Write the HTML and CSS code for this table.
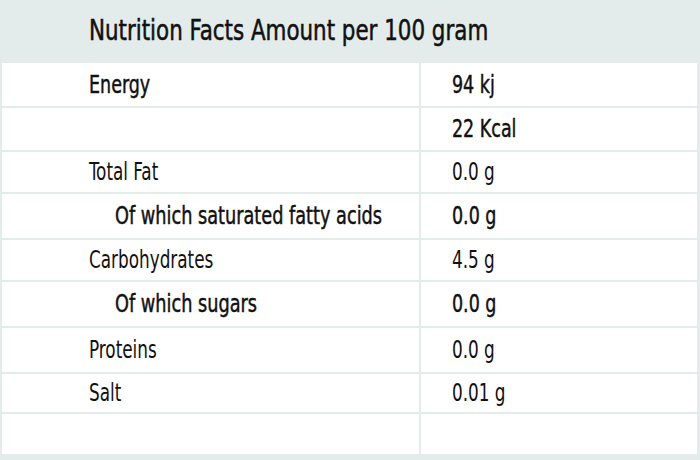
FILE: index.html
```html
<!DOCTYPE html>
<html>
<head>
<meta charset="utf-8">
<link rel="stylesheet" href="styles.css">
</head>
<body>
<div class="panel">
  <div class="title"><span class="txt">Nutrition Facts Amount per 100 gram</span></div>
  <div class="table">
    <div class="cell label strong"><span class="txt">Energy</span></div><div class="cell value strong"><span class="txt">94 kj</span></div>
    <div class="cell label"></div><div class="cell value strong"><span class="txt">22 Kcal</span></div>
    <div class="cell label"><span class="txt">Total Fat</span></div><div class="cell value"><span class="txt">0.0 g</span></div>
    <div class="cell label sub strong"><span class="txt">Of which saturated fatty acids</span></div><div class="cell value strong"><span class="txt">0.0 g</span></div>
    <div class="cell label"><span class="txt">Carbohydrates</span></div><div class="cell value"><span class="txt">4.5 g</span></div>
    <div class="cell label sub strong"><span class="txt">Of which sugars</span></div><div class="cell value strong"><span class="txt">0.0 g</span></div>
    <div class="cell label"><span class="txt">Proteins</span></div><div class="cell value"><span class="txt">0.0 g</span></div>
    <div class="cell label"><span class="txt">Salt</span></div><div class="cell value"><span class="txt">0.01 g</span></div>
    <div class="cell label"></div><div class="cell value"></div>
  </div>
</div>
</body>
</html>
```
FILE: styles.css
```css
html, body {
  margin: 0;
  padding: 0;
  background: #e3ebeb;
}
body {
  width: 700px;
  height: 460px;
  overflow: hidden;
  font-family: "DejaVu Sans Condensed", "DejaVu Sans", sans-serif;
  font-stretch: condensed;
  color: #111;
}
.panel {
  padding: 0 3px 0 2px;
}
.txt {
  display: inline-block;
  transform: scaleX(0.78);
  transform-origin: left center;
  white-space: nowrap;
}
.title {
  height: 63px;
  box-sizing: border-box;
  padding: 15px 0 0 87px;
  font-size: 28px;
  line-height: 32px;
  -webkit-text-stroke: 0.5px #111;
}
.title .txt {
  transform: scaleX(0.85);
}
.table {
  display: grid;
  grid-template-columns: 417px 276px;
  grid-template-rows: 43px 42px 40px 44px 40px 44px 44px 38px 40px;
  column-gap: 2px;
  row-gap: 2px;
}
.cell {
  background: #fff;
  display: flex;
  align-items: center;
  font-size: 24px;
  line-height: 28px;
  white-space: nowrap;
}
.label {
  padding-left: 87px;
}
.label.sub {
  padding-left: 113px;
}
.value {
  padding-left: 31px;
}
.strong {
  -webkit-text-stroke: 0.45px #111;
}
.strong .txt {
  transform: scaleX(0.81);
}
.label.sub .txt {
  transform: scaleX(0.82);
}
```
